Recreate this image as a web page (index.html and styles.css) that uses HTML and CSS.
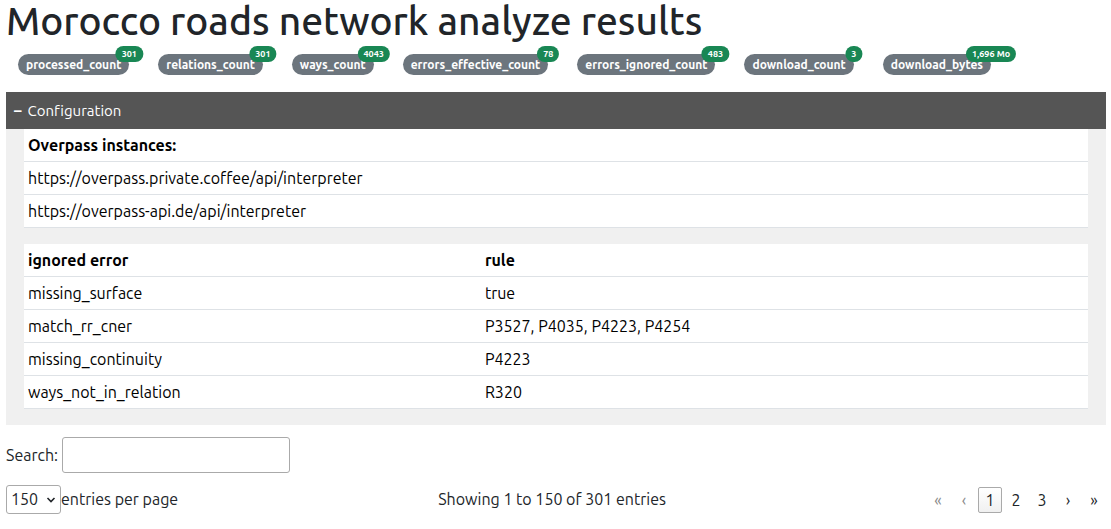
FILE: index.html
```html
<!DOCTYPE html>
<html lang="en">
<head>
<meta charset="utf-8">
<title>Morocco roads network analyze results</title>
<link rel="stylesheet" href="styles.css">
</head>
<body>
<h1 class="title">Morocco roads network analyze results</h1>
<div class="stats">
  <span class="stat">processed_count<span class="stat-value">301</span></span>
  <span class="stat">relations_count<span class="stat-value">301</span></span>
  <span class="stat">ways_count<span class="stat-value">4043</span></span>
  <span class="stat">errors_effective_count<span class="stat-value">78</span></span>
  <span class="stat">errors_ignored_count<span class="stat-value">483</span></span>
  <span class="stat">download_count<span class="stat-value">3</span></span>
  <span class="stat">download_bytes<span class="stat-value">1,696 Mo</span></span>
</div>
<button class="toggle" type="button" aria-expanded="true" aria-controls="config"><span class="toggle-sign">–</span>Configuration</button>
<section class="panel" id="config">
  <table class="table">
    <thead><tr><th>Overpass instances:</th></tr></thead>
    <tbody>
      <tr><td>https://overpass.private.coffee/api/interpreter</td></tr>
      <tr><td>https://overpass-api.de/api/interpreter</td></tr>
    </tbody>
  </table>
  <table class="table">
    <thead><tr><th>ignored error</th><th>rule</th></tr></thead>
    <tbody>
      <tr><td>missing_surface</td><td>true</td></tr>
      <tr><td>match_rr_cner</td><td>P3527, P4035, P4223, P4254</td></tr>
      <tr><td>missing_continuity</td><td>P4223</td></tr>
      <tr><td>ways_not_in_relation</td><td>R320</td></tr>
    </tbody>
  </table>
</section>
<div class="search">
  <label for="search">Search:</label>
  <input class="search-input" id="search" type="search">
</div>
<div class="controls">
  <div class="length">
    <span class="select-wrap">
      <select class="length-select" id="length"><option>150</option></select>
      <svg class="chevron" viewBox="0 0 10 6" aria-hidden="true"><path d="M1.5 1 5 4.5 8.5 1" fill="none" stroke="currentColor" stroke-width="1.6"/></svg>
    </span>
    <label class="caption" for="length">entries per page</label>
  </div>
  <div class="caption">Showing 1 to 150 of 301 entries</div>
  <nav class="pages" aria-label="Pagination">
    <button class="page" type="button" disabled>«</button>
    <button class="page" type="button" disabled>‹</button>
    <button class="page current" type="button" aria-current="page">1</button>
    <button class="page" type="button">2</button>
    <button class="page" type="button">3</button>
    <button class="page" type="button">›</button>
    <button class="page" type="button">»</button>
  </nav>
</div>
</body>
</html>
```
FILE: styles.css
```css
* { box-sizing: border-box; }
body {
  margin: 0;
  padding: 0 5px 0 6px;
  background: #fff;
  color: #212529;
  font: 16px/24px "Ubuntu", "Noto Sans", sans-serif;
  font-variant-ligatures: none;
}
button, input, select { font: inherit; font-variant-ligatures: none; color: inherit; }
.title {
  margin: 0 0 10px;
  font-family: "Ubuntu Medium", "Ubuntu", "Noto Sans", sans-serif;
  font-size: 39px;
  line-height: 42px;
  font-weight: 500;
}
.stats {
  display: flex;
  gap: 29px;
  padding: 2px 12px 17px;
}
.stat {
  position: relative;
  padding: 4px 8px;
  border-radius: 11px;
  background: #6c757d;
  color: #fff;
  font-size: 12px;
  line-height: 13px;
  font-weight: 700;
  white-space: nowrap;
}
.stat-value {
  position: absolute;
  top: 0;
  left: 100%;
  transform: translate(-50%, -50%);
  padding: 3px 6px;
  border-radius: 8px;
  background: #198754;
  font-size: 9px;
  line-height: 10px;
}
.toggle {
  display: flex;
  align-items: center;
  gap: 6px;
  width: 100%;
  padding: 8px;
  border: 0;
  background: #555;
  color: #fff;
  font-size: 15px;
  line-height: 21px;
}
.toggle-sign { font-weight: 700; }
.panel {
  display: flex;
  flex-direction: column;
  gap: 16px;
  padding: 0 18px 16px;
  background: #f0f0f0;
}
.table {
  width: 100%;
  border-collapse: collapse;
  background: #fff;
  color: #000;
}
.table th, .table td {
  padding: 4px;
  border-bottom: 1px solid #dee2e6;
  text-align: left;
}
.search {
  display: flex;
  align-items: center;
  gap: 4px;
  margin: 12px 0;
}
.search-input {
  appearance: none;
  width: 228px;
  height: 36px;
  padding: 5px;
  border: 1px solid #aaa;
  border-radius: 3px;
  background: transparent;
}
.controls {
  display: flex;
  align-items: center;
  justify-content: space-between;
}
.length { display: flex; align-items: center; }
.select-wrap { position: relative; display: flex; }
.length-select {
  appearance: none;
  width: 55px;
  height: 29px;
  padding: 0 4px 1px;
  border: 1px solid #aaa;
  border-radius: 3px;
  background: transparent;
}
.chevron {
  position: absolute;
  right: 5px;
  top: 12px;
  width: 10px;
  height: 6px;
  pointer-events: none;
}
.caption { padding-bottom: 1px; }
.pages { display: flex; gap: 2px; }
.page {
  width: 24px;
  height: 26px;
  padding: 0 0 1px;
  border: 1px solid transparent;
  border-radius: 2px;
  background: transparent;
  line-height: 24px;
}
.page:disabled { color: #888; }
.current {
  border-color: #aaa;
  background: linear-gradient(#fff, #f0f0f0);
}
```
